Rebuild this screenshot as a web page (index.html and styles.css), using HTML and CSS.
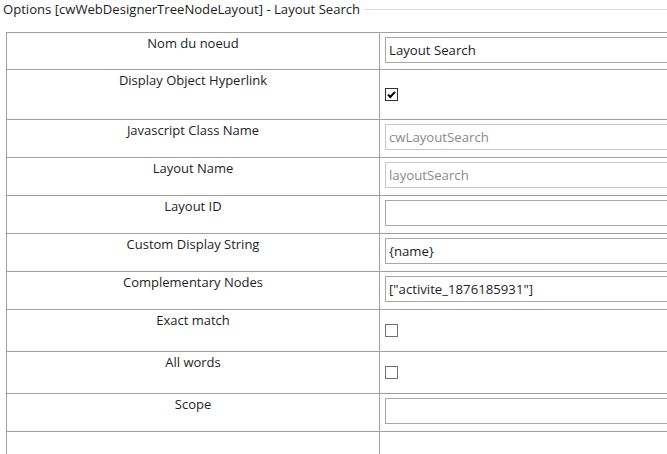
FILE: index.html
```html
<!DOCTYPE html>
<html>
<head>
<meta charset="utf-8">
<link rel="stylesheet" href="styles.css">
</head>
<body>
<div class="page">
  <div class="legend">
    <span class="legend-text">Options [cwWebDesignerTreeNodeLayout] - Layout Search</span>
    <span class="legend-line"></span>
  </div>
  <div class="table">
    <div class="row h37">
      <div class="label">Nom du noeud</div>
      <div class="value top"><div class="field">Layout Search</div></div>
    </div>
    <div class="row h50">
      <div class="label">Display Object Hyperlink</div>
      <div class="value mid"><span class="check checked"><svg viewBox="0 0 11 11" width="11" height="11"><path d="M2 5.6 L4.3 8 L9 2.8" fill="none" stroke="#000" stroke-width="2"/></svg></span></div>
    </div>
    <div class="row h38">
      <div class="label">Javascript Class Name</div>
      <div class="value top"><div class="field disabled">cwLayoutSearch</div></div>
    </div>
    <div class="row h38">
      <div class="label">Layout Name</div>
      <div class="value top"><div class="field disabled">layoutSearch</div></div>
    </div>
    <div class="row h38">
      <div class="label">Layout ID</div>
      <div class="value top"><div class="field"></div></div>
    </div>
    <div class="row h38">
      <div class="label">Custom Display String</div>
      <div class="value top"><div class="field">{name}</div></div>
    </div>
    <div class="row h38">
      <div class="label">Complementary Nodes</div>
      <div class="value top"><div class="field">["activite_1876185931"]</div></div>
    </div>
    <div class="row h42">
      <div class="label">Exact match</div>
      <div class="value mid"><span class="check"></span></div>
    </div>
    <div class="row h42">
      <div class="label">All words</div>
      <div class="value mid"><span class="check"></span></div>
    </div>
    <div class="row h38">
      <div class="label">Scope</div>
      <div class="value top"><div class="field"></div></div>
    </div>
    <div class="row h38">
      <div class="label"></div>
      <div class="value"></div>
    </div>
  </div>
</div>
</body>
</html>
```
FILE: styles.css
```css
html, body {
  margin: 0;
  padding: 0;
  overflow: hidden;
  background: #fff;
}
body {
  font-family: "Open Sans", "Liberation Sans", sans-serif;
  font-size: 13px;
  color: #1e1e1e;
  width: 667px;
  height: 454px;
}
.page {
  width: 667px;
  height: 454px;
  overflow: hidden;
}
.legend {
  display: flex;
  align-items: center;
  height: 18px;
  padding-left: 3px;
}
.legend-text {
  font-size: 13.1px;
  color: #222;
  white-space: nowrap;
  line-height: 18px;
}
.legend-line {
  flex: 1;
  height: 1px;
  background: #dcdcdc;
  margin-left: 5px;
}
.table {
  margin-top: 14px;
  margin-left: 6px;
  border-top: 1px solid #a0a0a0;
  border-left: 1px solid #a0a0a0;
}
.row {
  display: grid;
  grid-template-columns: 373px 1fr;
  box-sizing: border-box;
}
.h37 { height: 37px; }
.h38 { height: 38px; }
.h42 { height: 42px; }
.h50 { height: 50px; }
.label {
  border-right: 1px solid #a0a0a0;
  border-bottom: 1px solid #a0a0a0;
  text-align: center;
  padding-top: 2px;
  line-height: 17px;
  box-sizing: border-box;
}
.value {
  border-bottom: 1px solid #a0a0a0;
  padding-left: 5px;
  box-sizing: border-box;
  display: flex;
  min-width: 0;
}
.value.top {
  align-items: flex-start;
  padding-top: 4px;
}
.value.mid {
  align-items: center;
}
.field {
  box-sizing: border-box;
  flex: 1;
  height: 26px;
  border: 1px solid #a9a9a9;
  border-right: none;
  padding: 0 3px;
  line-height: 24px;
  font-size: 13.2px;
  color: #1e1e1e;
  background: #fff;
  white-space: nowrap;
  overflow: hidden;
}
.field.disabled {
  border-color: #c8c8c8;
  color: #8a8a8a;
}
.check {
  box-sizing: border-box;
  width: 13px;
  height: 13px;
  border: 1px solid #707070;
  background: #fff;
  display: flex;
  align-items: center;
  justify-content: center;
}
.check.checked {
  border-color: #333;
}
.check svg {
  display: block;
}
```
